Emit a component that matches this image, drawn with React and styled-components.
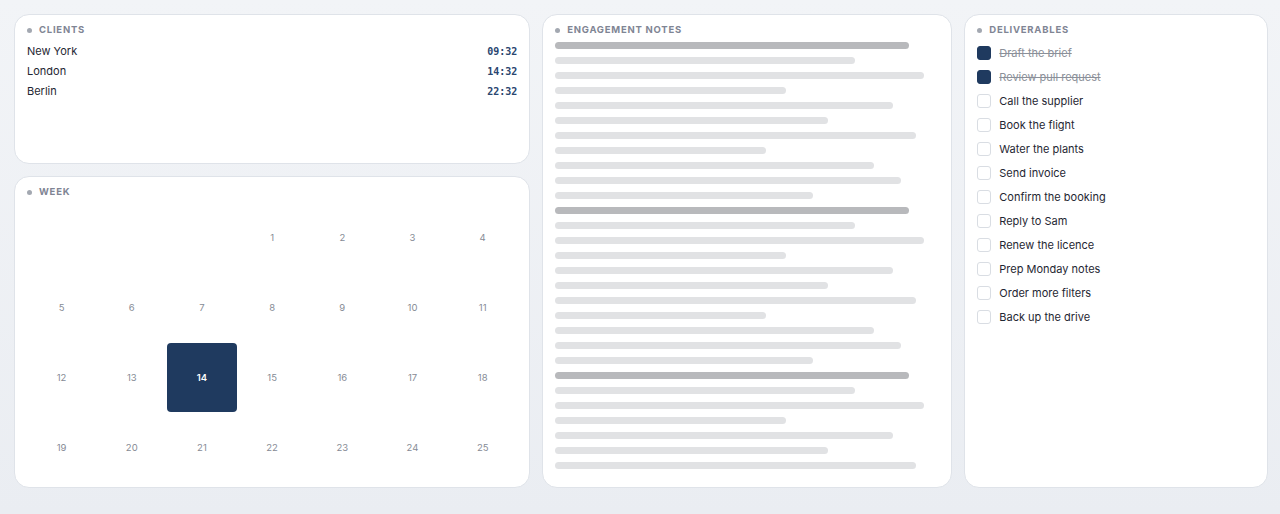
import React from "react";
import styled, { createGlobalStyle } from "styled-components";

const GlobalStyle = createGlobalStyle`
  * { box-sizing: border-box; }
  html, body {
    margin: 0;
    padding: 0;
    height: 100%;
  }
  body {
    font-family: Inter, "Noto Sans", sans-serif;
    background: linear-gradient(180deg, #f2f4f7 0%, #eaedf2 100%);
    color: #1f2733;
  }
`;

const Page = styled.div`
  padding: 14px 12px 14px 14px;
  height: 514px;
`;

const Board = styled.div`
  display: grid;
  grid-template-columns: 1.7fr 1.35fr 1fr;
  gap: 12px;
  height: 474px;
`;

const Column = styled.div`
  display: grid;
  grid-template-rows: 150px 1fr;
  gap: 12px;
  min-height: 0;
`;

const Card = styled.section`
  background: #fff;
  border: 1px solid #dfe3e9;
  border-radius: 15px;
  padding: 10px 12px 12px;
  display: flex;
  flex-direction: column;
  min-height: 0;
  overflow: ${(p) => (p.$clip ? "hidden" : "visible")};
`;

const Header = styled.h2`
  display: flex;
  align-items: center;
  gap: 7px;
  margin: 0 0 6px;
  height: 10px;
  line-height: 10px;
  font-size: 9.5px;
  font-weight: 700;
  letter-spacing: 0.08em;
  text-transform: uppercase;
  color: #7f8594;

  &::before {
    content: "";
    width: 5px;
    height: 5px;
    border-radius: 50%;
    background: #a3a8b1;
  }
`;

const ClientRow = styled.div`
  display: flex;
  justify-content: space-between;
  align-items: center;
  height: 20px;
  font-size: 11px;
  color: #1f2733;
`;

const Time = styled.span`
  font-family: "DejaVu Sans Mono", "Liberation Mono", monospace;
  font-size: 10px;
  font-weight: 700;
  color: #2a4670;
`;

const Calendar = styled.div`
  display: grid;
  grid-template-columns: repeat(7, 1fr);
  grid-auto-rows: 69px;
  gap: 1px;
`;

const Day = styled.div`
  display: flex;
  align-items: center;
  justify-content: center;
  border-radius: 4px;
  font-size: 9.5px;
  font-weight: ${(p) => (p.$today ? 600 : 400)};
  color: ${(p) => (p.$today ? "#ffffff" : "#868b95")};
  background: ${(p) => (p.$today ? "#1f3a5f" : "transparent")};
`;

const Notes = styled.div`
  display: flex;
  flex-direction: column;
  gap: 8px;
  padding-top: 1px;
`;

const Bar = styled.div`
  height: 7px;
  border-radius: 4px;
  background: ${(p) => (p.$strong ? "#b8b9bc" : "#e1e2e4")};
`;

const TaskList = styled.ul`
  list-style: none;
  margin: 0;
  padding: 0;
`;

const Task = styled.li`
  display: flex;
  align-items: center;
  gap: 8px;
  height: 24px;
  font-size: 11px;
  color: ${(p) => (p.$done ? "#8b9099" : "#1f2733")};
  text-decoration: ${(p) => (p.$done ? "line-through" : "none")};
`;

const Check = styled.span`
  width: 14px;
  height: 14px;
  flex: none;
  border-radius: 3px;
  border: 1px solid ${(p) => (p.$done ? "#1f3a5f" : "#d9dde3")};
  background: ${(p) => (p.$done ? "#1f3a5f" : "#fff")};
`;

const clients = [
  ["New York", "09:32"],
  ["London", "14:32"],
  ["Berlin", "22:32"],
];

const days = [null, null, null, ...Array.from({ length: 25 }, (_, i) => i + 1)];

const widths = [92, 78, 96, 60, 88, 71, 94, 55, 83, 90, 67];
const bars = Array.from({ length: 29 }, (_, i) => widths[i % 11]);

const tasks = [
  ["Draft the brief", true],
  ["Review pull request", true],
  ["Call the supplier"],
  ["Book the flight"],
  ["Water the plants"],
  ["Send invoice"],
  ["Confirm the booking"],
  ["Reply to Sam"],
  ["Renew the licence"],
  ["Prep Monday notes"],
  ["Order more filters"],
  ["Back up the drive"],
];

export default function App() {
  return (
    <>
      <GlobalStyle />
      <Page>
        <Board>
          <Column>
            <Card>
              <Header>Clients</Header>
              {clients.map(([city, time]) => (
                <ClientRow key={city}>
                  <span>{city}</span>
                  <Time>{time}</Time>
                </ClientRow>
              ))}
            </Card>
            <Card>
              <Header>Week</Header>
              <Calendar>
                {days.map((d, i) => (
                  <Day key={i} $today={d === 14}>
                    {d}
                  </Day>
                ))}
              </Calendar>
            </Card>
          </Column>
          <Card $clip>
            <Header>Engagement Notes</Header>
            <Notes>
              {bars.map((w, i) => (
                <Bar key={i} $strong={i % 11 === 0} style={{ width: `${w}%` }} />
              ))}
            </Notes>
          </Card>
          <Card>
            <Header>Deliverables</Header>
            <TaskList>
              {tasks.map(([label, done]) => (
                <Task key={label} $done={done}>
                  <Check $done={done} />
                  {label}
                </Task>
              ))}
            </TaskList>
          </Card>
        </Board>
      </Page>
    </>
  );
}
